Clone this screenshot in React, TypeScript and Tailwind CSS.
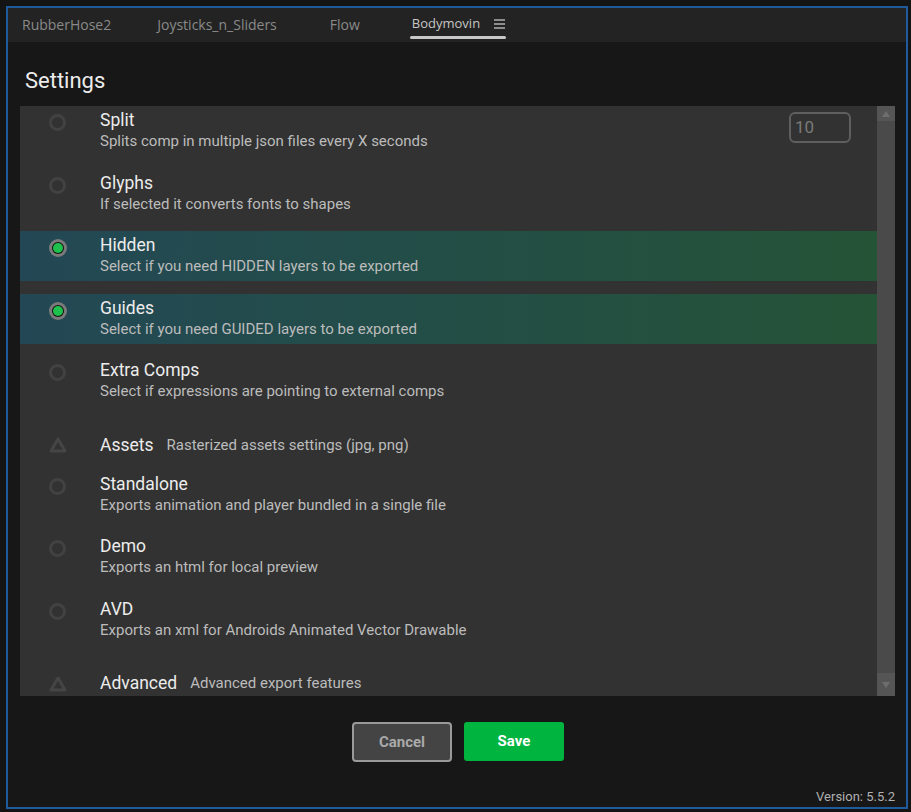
import React from 'react'

type Row =
  | { kind: 'option'; title: string; desc: string; on?: boolean; input?: string }
  | { kind: 'section'; title: string; desc: string }

const rows: Row[] = [
  { kind: 'option', title: 'Split', desc: 'Splits comp in multiple json files every X seconds', input: '10' },
  { kind: 'option', title: 'Glyphs', desc: 'If selected it converts fonts to shapes' },
  { kind: 'option', title: 'Hidden', desc: 'Select if you need HIDDEN layers to be exported', on: true },
  { kind: 'option', title: 'Guides', desc: 'Select if you need GUIDED layers to be exported', on: true },
  { kind: 'option', title: 'Extra Comps', desc: 'Select if expressions are pointing to external comps' },
  { kind: 'section', title: 'Assets', desc: 'Rasterized assets settings (jpg, png)' },
  { kind: 'option', title: 'Standalone', desc: 'Exports animation and player bundled in a single file' },
  { kind: 'option', title: 'Demo', desc: 'Exports an html for local preview' },
  { kind: 'option', title: 'AVD', desc: 'Exports an xml for Androids Animated Vector Drawable' },
  { kind: 'section', title: 'Advanced', desc: 'Advanced export features' },
]

function Radio({ on }: { on?: boolean }) {
  if (on) {
    return (
      <div className="w-[18px] h-[18px] rounded-full bg-[#7a7a7a] flex items-center justify-center">
        <div className="w-[12px] h-[12px] rounded-full bg-[#111] flex items-center justify-center">
          <div className="w-[10px] h-[10px] rounded-full bg-[#1ec14b]" />
        </div>
      </div>
    )
  }
  return <div className="w-[17px] h-[17px] rounded-full border-[3px] border-[#424242]" />
}

function Triangle() {
  return (
    <svg width="18" height="16" viewBox="0 0 18 16">
      <path d="M9 2 L16 14 L2 14 Z" fill="none" stroke="#454545" strokeWidth="3" strokeLinejoin="round" />
    </svg>
  )
}

export default function App() {
  return (
    <div className="w-[911px] h-[812px] bg-[#141414] pt-[6px] pl-[6px] pr-[3px] pb-[3px] font-['Roboto',sans-serif]">
      <div className="w-full h-full border-2 border-[#1f5a9c] bg-[#171717] flex flex-col">
        <div className="h-[34px] bg-[#232323] flex items-center pl-[14px] pb-[2px] font-['Open_Sans',sans-serif] text-[14px] text-[#8a8a8a] shrink-0">
          <span className="mr-[46px]">RubberHose2</span>
          <span className="mr-[53px]">Joysticks_n_Sliders</span>
          <span className="mr-[50px]">Flow</span>
          <span className="relative flex items-center h-full text-[#c6c6c6]">
            <span className="pl-[2px] text-[13px]">Bodymovin</span>
            <svg className="ml-[14px] mr-[1px]" width="11" height="10" viewBox="0 0 11 10">
              <path d="M0 1h11M0 5h11M0 9h11" stroke="#b0b0b0" strokeWidth="1.4" />
            </svg>
            <span className="absolute left-0 right-0 bottom-[1px] h-[3px] rounded-full bg-[#c8c8c8]" />
          </span>
        </div>

        <div className="h-[64px] flex items-center pl-[17px] pt-[12px] text-[22px] text-[#ececec] shrink-0">Settings</div>

        <div className="ml-[12px] mr-[11px] h-[590px] bg-[#323232] flex overflow-hidden shrink-0">
          <div className="flex-1 flex flex-col">
            {rows.map((r, i) =>
              r.kind === 'section' ? (
                <div key={i} className="h-[39px] mt-[12px] flex items-center pt-[15px] shrink-0">
                  <div className="w-[80px] flex justify-center pr-[4px]">
                    <Triangle />
                  </div>
                  <span className="text-[17.5px] text-[#ececec]">{r.title}</span>
                  <span className="ml-[13px] text-[15px] text-[#bcbcbc]">{r.desc}</span>
                </div>
              ) : (
                <div
                  key={i}
                  className={
                    'h-[50px] flex shrink-0 ' +
                    (i === 0 ? '' : 'mt-[12.5px] ') +
                    (r.on ? 'bg-gradient-to-r from-[#234855] to-[#245336]' : '')
                  }
                >
                  <div className="w-[80px] flex justify-center pt-[8px] pr-[5px]">
                    <Radio on={r.on} />
                  </div>
                  <div className="flex-1 flex flex-col pt-[3px]">
                    <span className="text-[17.5px] leading-[22px] text-[#ececec]">{r.title}</span>
                    <span className="text-[15px] leading-[21px] text-[#bcbcbc]">{r.desc}</span>
                  </div>
                  {r.input && (
                    <div className="w-[62px] h-[31px] mt-[6px] mr-[26px] rounded-[6px] border-2 border-[#5f5f5f] text-[17px] text-[#7a7a7a] pl-[4px] flex items-center">
                      {r.input}
                    </div>
                  )}
                </div>
              )
            )}
          </div>
          <div className="w-[18px] bg-[#4a4a4a] flex flex-col justify-between">
            <div className="h-[15px] bg-[#555] flex items-center justify-center">
              <svg width="10" height="8" viewBox="0 0 10 8">
                <path d="M5 1 L9 7 L1 7 Z" fill="#6e6e6e" />
              </svg>
            </div>
            <div className="h-[23px] bg-[#555] flex items-center justify-center">
              <svg width="10" height="8" viewBox="0 0 10 8">
                <path d="M1 1 L9 1 L5 7 Z" fill="#6e6e6e" />
              </svg>
            </div>
          </div>
        </div>

        <div className="flex justify-center gap-[12px] mt-[26px] pl-[2px] shrink-0">
          <button className="w-[100px] h-[40px] rounded-[4px] bg-[#444] border-2 border-[#9a9a9a] text-[15px] font-bold text-[#aaaaaa]">
            Cancel
          </button>
          <button className="w-[100px] h-[39px] rounded-[3px] bg-[#00b440] text-[15px] font-bold text-white">
            Save
          </button>
        </div>

        <div className="flex-1 flex items-end justify-end pr-[11px] pb-[1px] text-[13px] text-[#b0b0b0]">
          Version: 5.5.2
        </div>
      </div>
    </div>
  )
}
